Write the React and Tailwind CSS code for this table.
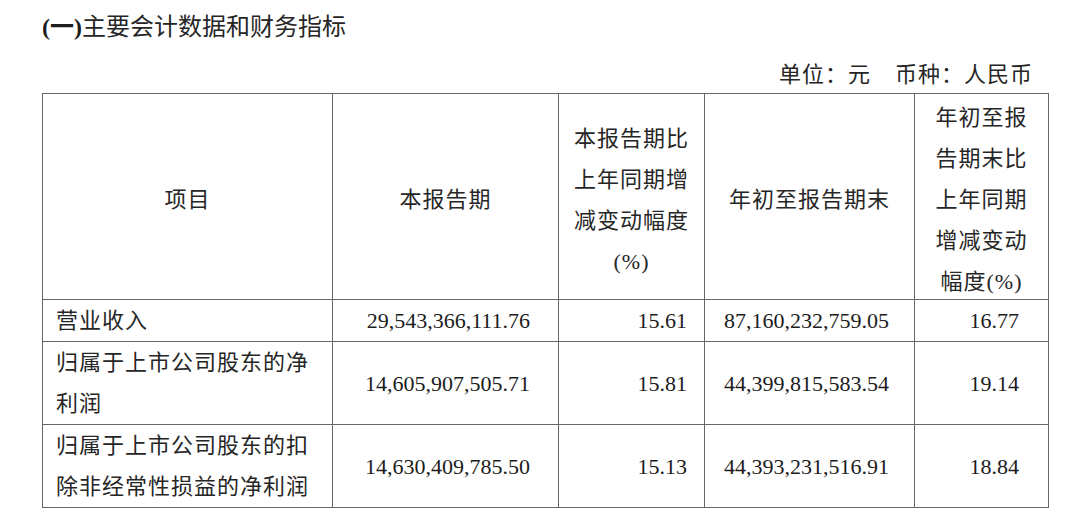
import React from "react";

const rows = [
  {
    name: ["营业收入"],
    a: "29,543,366,111.76",
    b: "15.61",
    c: "87,160,232,759.05",
    d: "16.77",
  },
  {
    name: ["归属于上市公司股东的净", "利润"],
    a: "14,605,907,505.71",
    b: "15.81",
    c: "44,399,815,583.54",
    d: "19.14",
  },
  {
    name: ["归属于上市公司股东的扣", "除非经常性损益的净利润"],
    a: "14,630,409,785.50",
    b: "15.13",
    c: "44,393,231,516.91",
    d: "18.84",
  },
];

function Lines({ items }) {
  return items.map((t, i) => (
    <React.Fragment key={i}>
      {i > 0 && <br />}
      {t}
    </React.Fragment>
  ));
}

function Head({ children }) {
  return (
    <th className="border border-[#666] font-normal text-center tracking-[1px] text-[#262626] p-0">
      <div className="relative top-[3px]">{children}</div>
    </th>
  );
}

export default function App() {
  return (
    <section className="w-[1080px] h-[519px] bg-white pl-[42px] pt-[13px] text-[22px] text-[#1c1c1c] font-['Liberation_Serif','Noto_Sans_CJK_SC',serif] overflow-hidden">
      <h2 className="text-[24px] leading-[28px]">
        <span className="font-bold">(一)</span>
        <span className="text-[#262626]">主要会计数据和财务指标</span>
      </h2>

      <div className="w-[1005px] mt-[20px] mb-[4px] pr-[14px] leading-[28px] flex justify-end gap-[24px] tracking-[1px] text-[#262626]">
        <span>单位：元</span>
        <span>币种：人民币</span>
      </div>

      <table className="table-fixed border-collapse w-[1006px] leading-[41px]">
        <colgroup>
          <col className="w-[290px]" />
          <col className="w-[226px]" />
          <col className="w-[146px]" />
          <col className="w-[210px]" />
          <col className="w-[134px]" />
        </colgroup>
        <thead>
          <tr className="h-[206px]">
            <Head>项目</Head>
            <Head>本报告期</Head>
            <Head>
              <Lines items={["本报告期比", "上年同期增", "减变动幅度", "(%)"]} />
            </Head>
            <Head>年初至报告期末</Head>
            <Head>
              <Lines items={["年初至报", "告期末比", "上年同期", "增减变动", "幅度(%)"]} />
            </Head>
          </tr>
        </thead>
        <tbody>
          {rows.map((r, i) => (
            <tr key={i}>
              <td className="border border-[#666] pl-[13px] py-0 align-middle tracking-[1px] text-[#262626]">
                <Lines items={r.name} />
              </td>
              <td className="border border-[#666] text-right pr-[28px] py-0 align-middle">{r.a}</td>
              <td className="border border-[#666] text-right pr-[17px] py-0 align-middle">{r.b}</td>
              <td className="border border-[#666] text-right pr-[25px] py-0 align-middle">{r.c}</td>
              <td className="border border-[#666] text-right pr-[29px] py-0 align-middle">{r.d}</td>
            </tr>
          ))}
        </tbody>
      </table>
    </section>
  );
}
